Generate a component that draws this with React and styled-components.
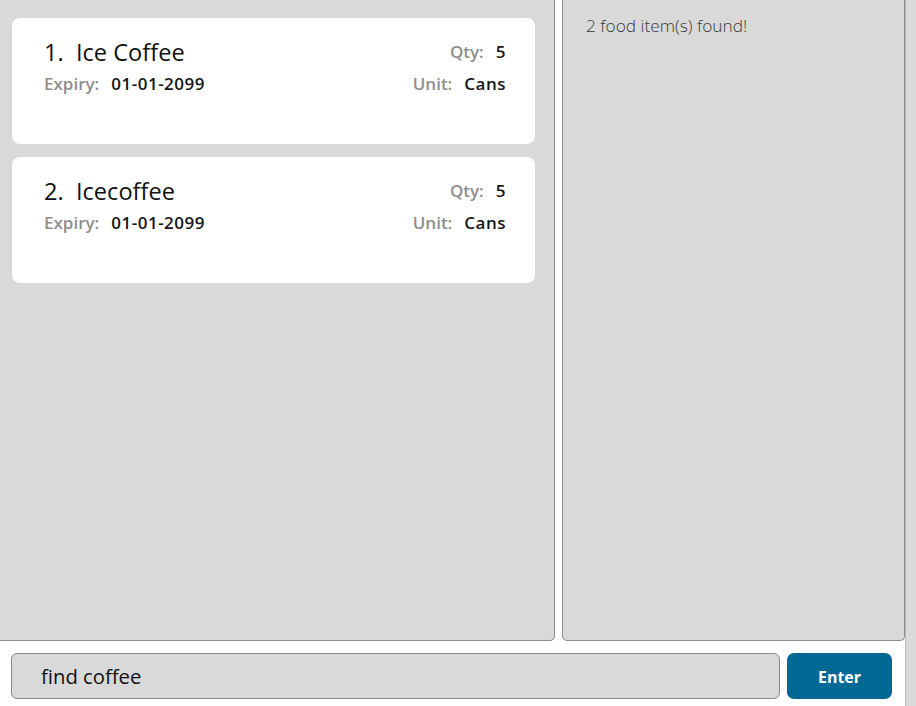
import React from 'react';
import styled, { createGlobalStyle } from 'styled-components';

const GlobalStyle = createGlobalStyle`
  html, body {
    margin: 0;
    padding: 0;
    background: #ffffff;
    font-family: 'Open Sans', 'Noto Sans', sans-serif;
  }
`;

const foods = [
  { name: 'Ice Coffee', qty: 5, expiry: '01-01-2099', unit: 'Cans' },
  { name: 'Icecoffee', qty: 5, expiry: '01-01-2099', unit: 'Cans' },
];

function FoodCard({ index, food }) {
  return (
    <StCard>
      <StCardRow>
        <StTitle>{index}.&nbsp; {food.name}</StTitle>
        <StField>
          <StLabel>Qty:</StLabel>
          <StValue>{food.qty}</StValue>
        </StField>
      </StCardRow>
      <StCardRow>
        <StField>
          <StLabel>Expiry:</StLabel>
          <StValue>{food.expiry}</StValue>
        </StField>
        <StField>
          <StLabel>Unit:</StLabel>
          <StValue>{food.unit}</StValue>
        </StField>
      </StCardRow>
    </StCard>
  );
}

export default function App() {
  return (
    <>
      <GlobalStyle />
      <StWindow>
        <StMain>
          <StPanels>
            <StListPanel>
              {foods.map((f, i) => (
                <FoodCard key={i} index={i + 1} food={f} />
              ))}
            </StListPanel>
            <StResultPanel>2 food item(s) found!</StResultPanel>
          </StPanels>
          <StCommandBar>
            <StCommandInput defaultValue="find coffee" />
            <StEnterButton>Enter</StEnterButton>
          </StCommandBar>
        </StMain>
        <StSideStrip />
      </StWindow>
    </>
  );
}

const StWindow = styled.div`
  display: flex;
  width: 916px;
  height: 706px;
  overflow: hidden;
`;

const StMain = styled.div`
  display: flex;
  flex-direction: column;
  width: 905px;
  background: #ffffff;
`;

const StSideStrip = styled.div`
  flex: 1;
  background: #dadada;
  border-left: 1px solid #b8b8b8;
`;

const StPanels = styled.div`
  display: flex;
  gap: 7px;
  height: 641px;
`;

const StListPanel = styled.div`
  display: flex;
  flex-direction: column;
  gap: 13px;
  width: 555px;
  box-sizing: border-box;
  padding: 18px 19px 0 12px;
  background: #d9d9d9;
  border-right: 1px solid #8c8c8c;
  border-bottom: 1px solid #8c8c8c;
  border-bottom-right-radius: 5px;
`;

const StResultPanel = styled.div`
  flex: 1;
  box-sizing: border-box;
  padding: 14px 20px 0 23px;
  background: #d9d9d9;
  border: 1px solid #8c8c8c;
  border-top: none;
  border-radius: 0 0 5px 5px;
  font-size: 17.3px;
  line-height: 24px;
  font-weight: 300;
  color: #3a3a3a;
`;

const StCard = styled.div`
  display: flex;
  flex-direction: column;
  gap: 5px;
  height: 126px;
  box-sizing: border-box;
  padding: 19px 29px 0 32px;
  background: #ffffff;
  border-radius: 8px;
`;

const StCardRow = styled.div`
  display: flex;
  justify-content: space-between;
  align-items: center;
`;

const StTitle = styled.div`
  font-size: 23.6px;
  color: #111111;
  line-height: 30px;
`;

const StField = styled.div`
  display: flex;
  gap: 12px;
  font-size: 17px;
  font-weight: 600;
  line-height: 24px;
`;

const StLabel = styled.span`
  color: #8e8e8e;
`;

const StValue = styled.span`
  color: #161616;
  letter-spacing: 0.5px;
`;

const StCommandBar = styled.div`
  display: flex;
  gap: 7px;
  padding: 12px 13px 0 11px;
`;

const StCommandInput = styled.input`
  flex: 1;
  height: 46px;
  box-sizing: border-box;
  padding: 0 29px;
  background: #d9d9d9;
  border: 1px solid #8a8a8a;
  border-radius: 6px;
  font-family: 'Open Sans', 'Noto Sans', sans-serif;
  font-size: 20.3px;
  color: #111111;
  outline: none;
`;

const StEnterButton = styled.button`
  width: 105px;
  height: 46px;
  background: #006994;
  border: none;
  border-radius: 7px;
  color: #ffffff;
  font-family: 'Open Sans', 'Noto Sans', sans-serif;
  font-size: 16px;
  font-weight: 700;
  padding-top: 2px;
`;
